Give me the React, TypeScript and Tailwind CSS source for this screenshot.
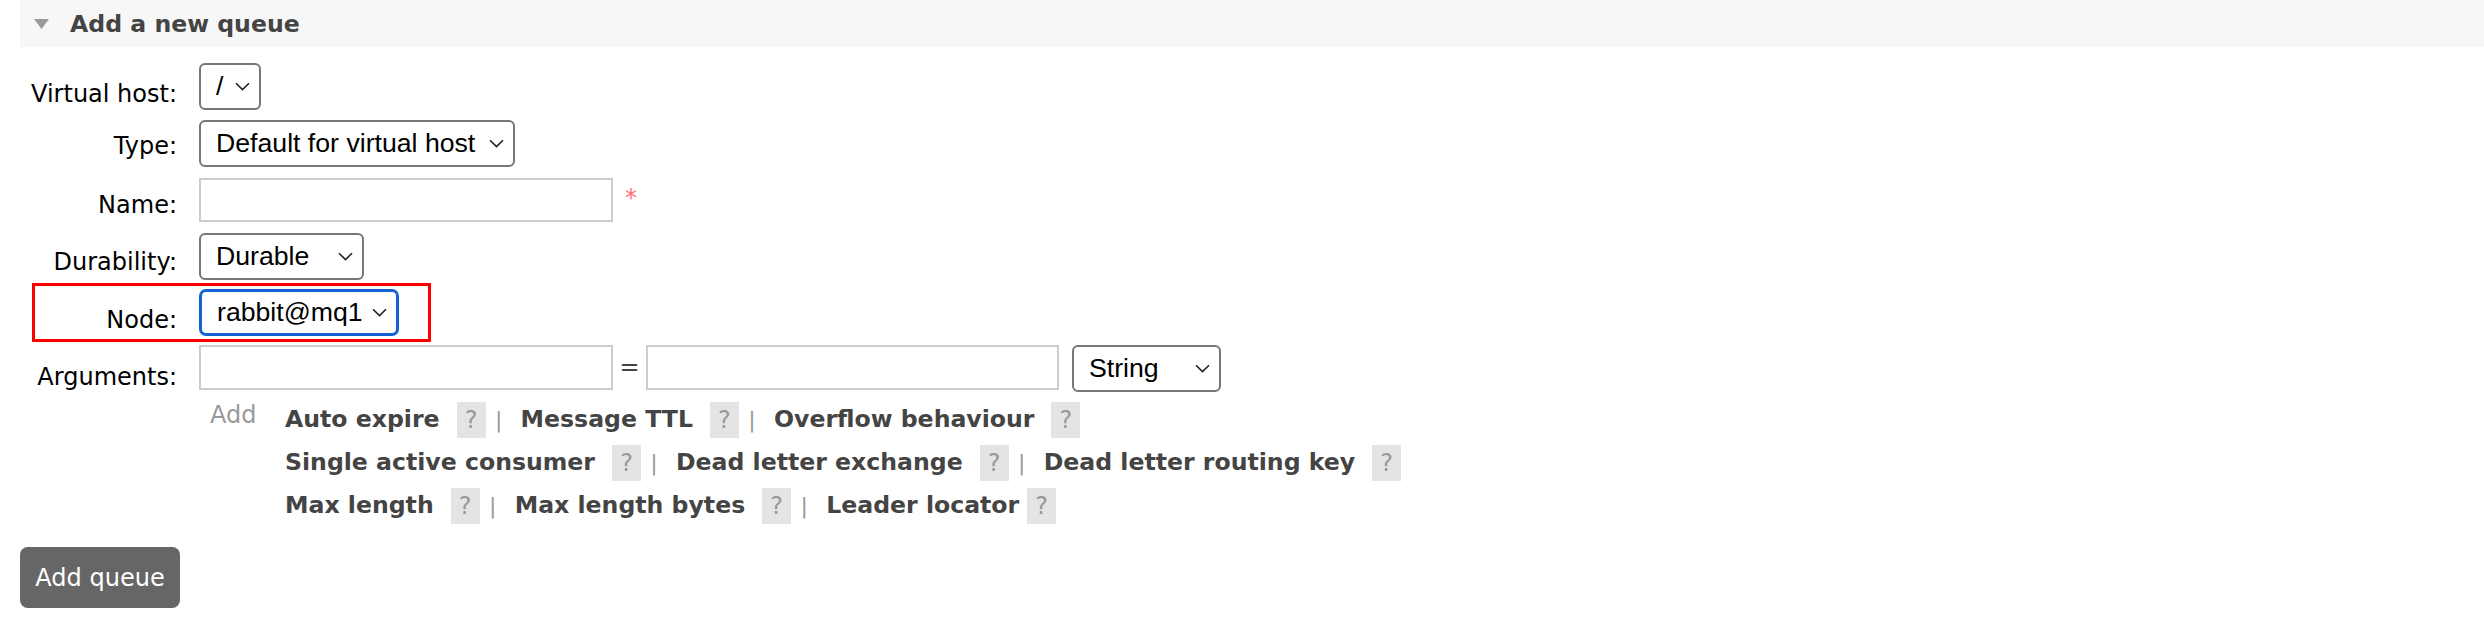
import React from "react";

type Sel = { text: string; w: string; focused?: boolean };

function Chevron() {
  return (
    <svg width="15" height="9" viewBox="0 0 15 9" className="shrink-0">
      <path d="M1 1.2 L7.5 7.6 L14 1.2" fill="none" stroke="#222" strokeWidth="1.6" />
    </svg>
  );
}

function FakeSelect({ text, w, focused }: Sel) {
  return (
    <div
      className={`${w} h-[47px] flex items-center justify-between bg-white pl-[15px] pr-[9px] font-['Liberation_Sans'] text-[26.67px] text-black ${
        focused ? "border-[3px] border-[#1462d4] rounded-[7px] pl-[14px] pr-[8px]" : "border-2 border-[#777] rounded-[6px]"
      }`}
    >
      <span className="whitespace-nowrap leading-none">{text}</span>
      <Chevron />
    </div>
  );
}

function TextBox({ w }: { w: string }) {
  return <div className={`${w} h-[45px] border-2 border-[#ccc] bg-white`} />;
}

function Row({
  label,
  h,
  mt,
  children,
  marked,
}: {
  label: string;
  h: string;
  mt: string;
  children: React.ReactNode;
  marked?: boolean;
}) {
  return (
    <div className={`relative flex ${h}`}>
      <div className={`w-[157px] shrink-0 text-right text-[24px] leading-[28px] text-black ${mt}`}>{label}</div>
      <div className="ml-[22px] flex items-start">{children}</div>
      {marked && (
        <div className="absolute left-[12px] top-[-6px] w-[399px] h-[59px] border-[3px] border-[#ff0000] pointer-events-none" />
      )}
    </div>
  );
}

const linkRows = [
  ["Auto expire", "Message TTL", "Overflow behaviour"],
  ["Single active consumer", "Dead letter exchange", "Dead letter routing key"],
  ["Max length", "Max length bytes", "Leader locator"],
];

function Help({ tight }: { tight?: boolean }) {
  return (
    <span
      className={`${tight ? "ml-[8px]" : "ml-[17px]"} w-[29px] h-[36px] bg-[#e4e4e4] text-[#999] text-[24px] flex items-center justify-center`}
    >
      ?
    </span>
  );
}

export default function App() {
  return (
    <div className="min-h-[624px] bg-white pl-[20px] font-['DejaVu_Sans',sans-serif]">
      <div className="h-[47px] bg-[#f7f7f7] flex items-center">
        <svg width="15" height="10" viewBox="0 0 15 10" className="ml-[14px]">
          <path d="M0 0 H15 L7.5 10 Z" fill="#999" />
        </svg>
        <h2 className="ml-[21px] mt-[2px] text-[23.6px] font-bold text-[#444] leading-none">Add a new queue</h2>
      </div>

      <div className="mt-[16px] flex flex-col">
        <Row label="Virtual host:" h="h-[57px]" mt="mt-[17px]">
          <div className="h-[46px]">
            <FakeSelect text="/" w="w-[62px]" />
          </div>
        </Row>
        <Row label="Type:" h="h-[58px]" mt="mt-[12px]">
          <FakeSelect text="Default for virtual host" w="w-[316px]" />
        </Row>
        <Row label="Name:" h="h-[55px]" mt="mt-[13px]">
          <div className="w-[414px] h-[44px] border-2 border-[#ccc] bg-white" />
          <span className="ml-[12px] mt-[6px] text-[24px] leading-[28px] text-[#ff7070]">*</span>
        </Row>
        <Row label="Durability:" h="h-[56px]" mt="mt-[15px]">
          <FakeSelect text="Durable" w="w-[165px]" />
        </Row>
        <Row label="Node:" h="h-[56px]" mt="mt-[17px]" marked>
          <FakeSelect text="rabbit@mq1" w="w-[200px]" focused />
        </Row>
        <Row label="Arguments:" h="h-[53px]" mt="mt-[18px]">
          <TextBox w="w-[414px]" />
          <span className="w-[33px] text-center text-[24px] leading-[45px] text-[#444]">=</span>
          <TextBox w="w-[413px]" />
          <div className="ml-[13px]">
            <FakeSelect text="String" w="w-[149px]" />
          </div>
        </Row>

        <div className="flex">
          <div className="w-[190px] shrink-0" />
          <div className="w-[75px] shrink-0 text-[24px] leading-[28px] text-[#999] mt-[3px]">Add</div>
          <div className="flex flex-col">
            {linkRows.map((row, ri) => (
              <div key={ri} className="flex items-center h-[43px]">
                {row.map((item, i) => (
                  <React.Fragment key={item}>
                    <span className="text-[23.6px] font-bold text-[#444] whitespace-nowrap">{item}</span>
                    <Help tight={item === "Leader locator"} />
                    {i < row.length - 1 && (
                      <span className="ml-[9px] mr-[18px] w-[8px] text-center text-[22px] text-[#999]">|</span>
                    )}
                  </React.Fragment>
                ))}
              </div>
            ))}
          </div>
        </div>

        <button className="mt-[20px] w-[160px] h-[61px] rounded-[8px] bg-[#666] text-white text-[24px] flex items-center justify-center">
          Add queue
        </button>
      </div>
    </div>
  );
}
